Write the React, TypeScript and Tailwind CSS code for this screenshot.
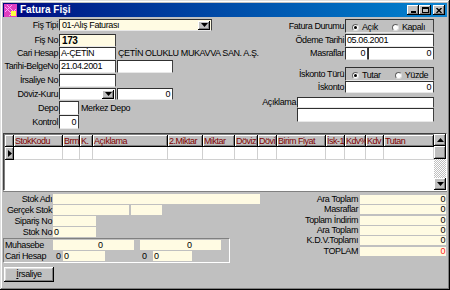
import React from 'react'

const raised =
  'shadow-[inset_-1px_-1px_0_#000,inset_1px_1px_0_#fff,inset_-2px_-2px_0_#808080]'
const sunken = 'border border-t-[#303030] border-l-[#303030] border-r-[#404040] border-b-[#e8e8e8]'

function Arrow({ up = false }: { up?: boolean }) {
  return (
    <svg width="7" height="4" viewBox="0 0 7 4">
      <path d={up ? 'M3.5 0 L7 4 L0 4 Z' : 'M0 0 L7 0 L3.5 4 Z'} fill="#000" />
    </svg>
  )
}

function DropBtn() {
  return (
    <span className={`w-[12px] h-[9px] mr-[1px] bg-[#c0c0c0] flex items-center justify-center shrink-0 ${raised}`}>
      <Arrow />
    </span>
  )
}

function Radio({ checked, label }: { checked?: boolean; label: string }) {
  return (
    <span className="flex items-center gap-[3px]">
      <span className="w-[7px] h-[7px] rounded-full bg-white border border-t-[#606060] border-l-[#606060] border-r-[#dfdfdf] border-b-[#dfdfdf] flex items-center justify-center">
        {checked && <span className="w-[3px] h-[3px] rounded-full bg-black" />}
      </span>
      {label}
    </span>
  )
}

const cols = [
  { t: 'StokKodu', w: 'w-[49px]' },
  { t: 'Brm', w: 'w-[17px]' },
  { t: 'K.', w: 'w-[13px]' },
  { t: 'Açıklama', w: 'w-[75px]' },
  { t: '2.Miktar', w: 'w-[35px]' },
  { t: 'Miktar', w: 'w-[32px]' },
  { t: 'Döviz', w: 'w-[23px]' },
  { t: 'Dövi', w: 'w-[19px]' },
  { t: 'Birim Fiyat', w: 'w-[49px]' },
  { t: 'İsk-1', w: 'w-[19px]' },
  { t: 'Kdv%', w: 'w-[21px]' },
  { t: 'Kdv', w: 'w-[18px]' },
  { t: 'Tutan', w: 'w-[50px]' },
]

const totals = [
  { t: 'Ara Toplam', h: 'h-[10px]' },
  { t: 'Masraflar', h: 'h-[11px]' },
  { t: 'Toplam İndirim', h: 'h-[10px]' },
  { t: 'Ara Toplam', h: 'h-[10px]' },
  { t: 'K.D.V.Toplamı', h: 'h-[11px]' },
  { t: 'TOPLAM', h: 'h-[10px]', red: true },
]

export default function App() {
  return (
    <div className="w-[450px] h-[290px] bg-[#c0c0c0] p-[3px] flex flex-col overflow-hidden text-[9px] leading-none tracking-[-0.4px] text-black font-['Liberation_Sans',Arial,sans-serif] shadow-[inset_-1px_-1px_0_#000,inset_1px_1px_0_#dfdfdf,inset_-2px_-2px_0_#808080,inset_2px_2px_0_#fff]">
      {/* title bar */}
      <div className="h-[14px] shrink-0 flex items-center bg-linear-to-r from-[#000080] to-[#1084d0] pl-[1px] pr-[2px]">
        <svg width="13" height="13" viewBox="0 0 13 13">
          <rect width="13" height="13" fill="#e040c0" />
          <path d="M1 3 L10 12 M3 1 L12 10 M1 8 L8 1 M5 12 L12 5" stroke="#ffa0ff" strokeWidth="1" />
          <rect x="7" y="7" width="5" height="5" fill="#ffff40" />
        </svg>
        <span className="ml-[3px] text-white font-bold text-[10px] tracking-normal">Fatura Fişi</span>
        <div className="ml-auto flex items-center">
          <span className={`w-[12px] h-[10px] bg-[#c0c0c0] flex items-end justify-center pb-[2px] ${raised}`}>
            <span className="w-[5px] h-[2px] bg-black" />
          </span>
          <span className={`w-[12px] h-[10px] bg-[#c0c0c0] flex items-center justify-center ${raised}`}>
            <span className="w-[7px] h-[6px] border border-black border-t-2" />
          </span>
          <span className={`ml-[2px] w-[12px] h-[10px] bg-[#c0c0c0] flex items-center justify-center ${raised}`}>
            <svg width="6" height="5" viewBox="0 0 6 5">
              <path d="M0.5 0 L5.5 5 M5.5 0 L0.5 5" stroke="#000" strokeWidth="1.4" />
            </svg>
          </span>
        </div>
      </div>

      {/* header form */}
      <div className="h-[116px] shrink-0 flex">
        <div className="w-[270px] flex flex-col">
          <div className="mt-[2px] h-[12px] flex items-center">
            <span className="w-[56px] text-right pr-[1px]">Fiş Tipi</span>
            <div className={`w-[153px] h-full bg-[#fffbe3] flex items-center ${sunken}`}>
              <span className="pl-[2px]">01-Alış Faturası</span>
              <span className="ml-auto"><DropBtn /></span>
            </div>
          </div>
          <div className="mt-[3px] h-[13px] flex items-center">
            <span className="w-[56px] text-right pr-[1px]">Fiş No</span>
            <div className={`w-[57px] h-full bg-[#fffbe3] flex items-center pl-[2px] font-bold text-[10px] ${sunken}`}>173</div>
          </div>
          <div className="h-[13px] flex items-center">
            <span className="w-[56px] text-right pr-[1px]">Cari Hesap</span>
            <div className={`w-[57px] h-full bg-white flex items-center pl-[1px] ${sunken}`}>A-ÇETİN</div>
            <span className="ml-[2px] whitespace-nowrap">ÇETİN OLUKLU MUKAVVA SAN. A.Ş.</span>
          </div>
          <div className="h-[13px] flex items-center">
            <span className="w-[56px] text-right pr-[1px]">Tarihi-BelgeNo</span>
            <div className={`w-[57px] h-full bg-white flex items-center pl-[1px] ${sunken}`}>21.04.2001</div>
            <div className={`ml-[1px] w-[56px] h-full bg-white ${sunken}`} />
          </div>
          <div className="h-[14px] flex items-center">
            <span className="w-[56px] text-right pr-[1px]">İrsaliye No</span>
            <div className={`w-[57px] h-[13px] bg-white ${sunken}`} />
          </div>
          <div className="h-[14px] flex items-center">
            <span className="w-[56px] text-right pr-[1px]">Döviz-Kuru</span>
            <div className={`w-[57px] h-[12px] bg-white flex items-center justify-end ${sunken}`}>
              <DropBtn />
            </div>
            <div className={`ml-[1px] w-[56px] h-[12px] bg-white flex items-center justify-end pr-[2px] ${sunken}`}>0</div>
          </div>
          <div className="h-[14px] flex items-center">
            <span className="w-[56px] text-right pr-[1px]">Depo</span>
            <div className={`w-[20px] h-[14px] bg-white ${sunken}`} />
            <span className="ml-[2px]">Merkez Depo</span>
          </div>
          <div className="h-[14px] flex items-center">
            <span className="w-[56px] text-right pr-[1px]">Kontrol</span>
            <div className={`w-[20px] h-[14px] bg-white flex items-center justify-end pr-[2px] ${sunken}`}>0</div>
          </div>
        </div>

        <div className="flex-1 flex flex-col items-end pr-[13px]">
          <div className="mt-[2px] h-[14px] flex items-center">
            <span className="pr-[1px]">Fatura Durumu</span>
            <div className={`w-[89px] h-full flex items-center pt-[3px] pl-[6px] gap-[14px] ${sunken}`}>
              <Radio checked label="Açık" />
              <Radio label="Kapalı" />
            </div>
          </div>
          <div className="mt-[1px] h-[13px] flex items-center">
            <span className="pr-[1px]">Ödeme Tarihi</span>
            <div className={`w-[89px] h-full bg-white flex items-center pl-[1px] ${sunken}`}>05.06.2001</div>
          </div>
          <div className="h-[13px] flex items-center">
            <span className="pr-[1px]">Masraflar</span>
            <div className={`w-[23px] h-full bg-white flex items-center justify-end pr-[2px] ${sunken}`}>0</div>
            <div className={`w-[66px] h-full bg-white flex items-center justify-end pr-[2px] ${sunken}`}>0</div>
          </div>
          <div className="mt-[7px] h-[14px] flex items-center">
            <span className="pr-[1px]">İskonto Türü</span>
            <div className={`w-[89px] h-full flex items-center pt-[3px] pl-[6px] gap-[14px] ${sunken}`}>
              <Radio checked label="Tutar" />
              <Radio label="Yüzde" />
            </div>
          </div>
          <div className="h-[12px] flex items-center">
            <span className="pr-[1px]">İskonto</span>
            <div className={`w-[89px] h-full bg-white flex items-center justify-end pr-[2px] ${sunken}`}>0</div>
          </div>
          <div className="mt-[4px] h-[11px] flex items-center">
            <span className="pr-[1px]">Açıklama</span>
            <div className={`w-[137px] h-full bg-white ${sunken}`} />
          </div>
          <div className={`w-[137px] h-[14px] bg-white ${sunken}`} />
        </div>
      </div>

      {/* grid */}
      <div className="h-[58px] shrink-0 flex bg-white border border-t-[#404040] border-l-[#404040] border-r-[#fff] border-b-[#fff] shadow-[inset_1px_1px_0_#808080]">
        <div className="flex-1 flex flex-col pt-[1px] pl-[1px]">
          <div className="flex h-[12px]">
            <div className={`w-[9px] h-full bg-[#c0c0c0] ${raised}`} />
            {cols.map((c) => (
              <div key={c.t} className={`${c.w} h-full bg-[#c0c0c0] text-[#800000] pl-[1px] flex items-center overflow-hidden whitespace-nowrap tracking-[-0.5px] ${raised}`}>
                {c.t}
              </div>
            ))}
          </div>
          <div className="flex h-[13px]">
            <div className={`w-[9px] h-full bg-[#c0c0c0] flex items-center justify-center ${raised}`}>
              <svg width="4" height="7" viewBox="0 0 4 7">
                <path d="M0 0 L4 3.5 L0 7 Z" fill="#000" />
              </svg>
            </div>
            {cols.map((c) => (
              <div key={c.t} className={`${c.w} h-full border-r border-b border-[#d0d0d0]`} />
            ))}
          </div>
        </div>
        <div className="w-[13px] flex flex-col">
          <div className={`h-[12px] bg-[#c0c0c0] flex items-center justify-center ${raised}`}>
            <Arrow up />
          </div>
          <div className={`h-[13px] bg-[#c0c0c0] ${raised}`} />
          <div className="flex-1 bg-[repeating-conic-gradient(#fff_0_25%,#c0c0c0_0_50%)] bg-[length:2px_2px]" />
          <div className={`h-[12px] bg-[#c0c0c0] flex items-center justify-center ${raised}`}>
            <Arrow />
          </div>
        </div>
      </div>

      {/* bottom */}
      <div className="flex-1 flex border-t border-[#808080]">
        <div className="w-[262px] flex flex-col">
          <div className="mt-[2px] h-[10px] flex items-center">
            <span className="w-[50px] text-right pr-[1px]">Stok Adı</span>
            <div className="w-[207px] h-full bg-[#fffbe3]" />
          </div>
          <div className="mt-[1px] h-[10px] flex items-center">
            <span className="w-[50px] text-right pr-[1px] whitespace-nowrap">Gerçek Stok</span>
            <div className="w-[76px] h-full bg-[#fffbe3]" />
            <div className="ml-[2px] w-[31px] h-full bg-[#fffbe3]" />
          </div>
          <div className="mt-[1px] h-[10px] flex items-center">
            <span className="w-[50px] text-right pr-[1px]">Sipariş No</span>
            <div className="w-[43px] h-full bg-[#fffbe3]" />
          </div>
          <div className="mt-[1px] h-[10px] flex items-center">
            <span className="w-[50px] text-right pr-[1px]">Stok No</span>
            <div className="w-[43px] h-full bg-[#fffbe3] flex items-center pl-[1px]">0</div>
          </div>
          <div className="mt-[1px] w-[227px] h-[25px] flex flex-col justify-center gap-[1px] pl-[1px] border border-t-[#808080] border-l-[#808080] border-r-white border-b-white">
            <div className="h-[10px] flex items-center">
              <span className="w-[48px]">Muhasebe</span>
              <div className="w-[81px] h-full bg-[#fffbe3] flex items-center pl-[45px]">0</div>
              <div className="ml-[6px] w-[81px] h-full bg-[#fffbe3] flex items-center pl-[47px]">0</div>
            </div>
            <div className="h-[10px] flex items-center">
              <span className="w-[51px]">Cari Hesap</span>
              <span className="w-[7px]">0</span>
              <div className="w-[42px] h-full bg-[#fffbe3] flex items-center pl-[1px]">0</div>
              <span className="ml-[37px] w-[11px]">0</span>
              <div className="w-[39px] h-full bg-[#fffbe3] flex items-center pl-[1px]">0</div>
            </div>
          </div>
          <div className="mt-[4px] ml-[1px] w-[50px] h-[15px] shrink-0 bg-[#c0c0c0] flex items-center justify-center shadow-[inset_-1px_-1px_0_#000,inset_1px_1px_0_#fff,inset_-2px_-2px_0_#808080,inset_2px_2px_0_#dfdfdf]">
            <span><span className="underline">İ</span>rsaliye</span>
          </div>
        </div>
        <div className="flex-1 flex flex-col items-end pr-[1px] pt-[3px]">
          {totals.map((r, i) => (
            <div key={i} className={`${r.h} flex items-start`}>
              <span className="pr-[2px] leading-[9px]">{r.t}</span>
              <div className={`w-[86px] h-[9px] bg-[#fffbe3] text-right pr-[1px] leading-[9px] ${r.red ? 'text-[#ff2020]' : ''}`}>0</div>
            </div>
          ))}
        </div>
      </div>
    </div>
  )
}
